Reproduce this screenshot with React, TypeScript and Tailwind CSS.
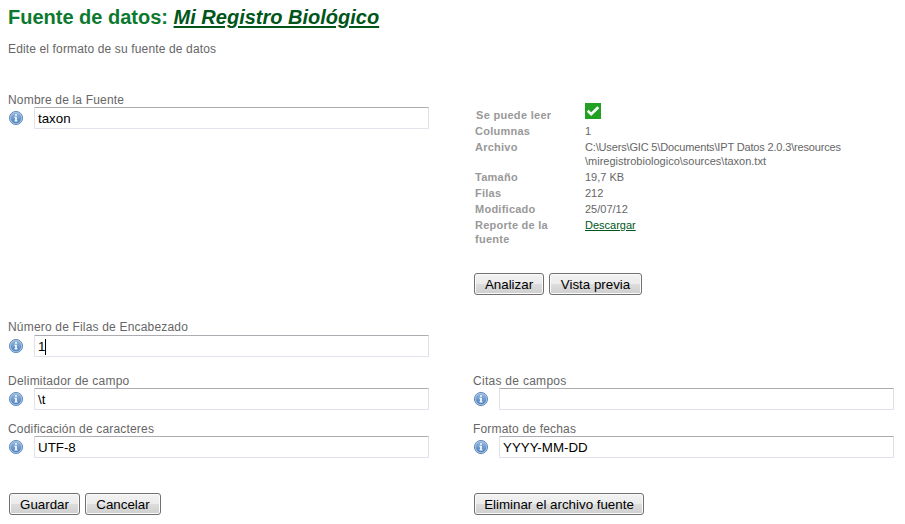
import type { ReactNode } from "react";

function InfoIcon() {
  return (
    <svg className="mt-[3px] mr-[10px] h-4 w-4 shrink-0" viewBox="0 0 16 16">
      <defs>
        <linearGradient id="info" x1="0" y1="0" x2="0" y2="1">
          <stop offset="0" stopColor="#94b8de" />
          <stop offset="1" stopColor="#4d80bd" />
        </linearGradient>
      </defs>
      <circle cx="8" cy="8" r="6.6" fill="#a9c5e4" stroke="#5c87b8" strokeWidth="0.9" />
      <circle cx="8" cy="8" r="5.3" fill="url(#info)" />
      <path d="M7.1 4.2h1.8v1.6H7.1zM6.4 6.8h2.4v3.6h.8v1H6.4v-1h.8V7.8h-.8z" fill="#fff" />
    </svg>
  );
}

type FieldProps = { label: string; value: string; tracking?: string; labelHeight?: string; caret?: boolean };

function Field({ label, value, tracking = "tracking-[0.18px]", labelHeight = "h-[15px]", caret }: FieldProps) {
  return (
    <div className="w-[421px]">
      <div className={`text-[12px] leading-4 whitespace-nowrap text-[#666] ${labelHeight} ${tracking}`}>{label}</div>
      <div className="flex">
        <InfoIcon />
        <div className="flex h-[22px] w-[395px] items-center rounded-[1px] border border-[#e2e3ea] border-t-[#abadb3] border-r-[#dbdfe6] pt-[2px] pl-[3px] text-[13.333px] leading-[16px] text-black">
          <span>{value}</span>
          {caret && <span className="h-[16px] w-px bg-black" />}
        </div>
      </div>
    </div>
  );
}

function Button({ children, width }: { children: ReactNode; width: string }) {
  return (
    <button
      className={`h-[22px] shrink-0 rounded-[3px] border border-[#707070] bg-[linear-gradient(#f2f2f2,#ebebeb_50%,#dddddd_50%,#cfcfcf)] p-0 pt-px text-[13.333px] leading-[20px] whitespace-nowrap text-black shadow-[inset_0_0_0_1px_#fbfbfb] ${width}`}
    >
      {children}
    </button>
  );
}

function Detail({ name, children, height }: { name: string; children: ReactNode; height: string }) {
  return (
    <div className={`flex text-[11px] leading-[14px] ${height}`}>
      <div className="w-[110px] pr-4 font-bold tracking-[0.25px] text-[#999]">{name}</div>
      <div className="whitespace-nowrap text-[#666]">{children}</div>
    </div>
  );
}

export default function App() {
  return (
    <main className="h-[524px] w-[905px] overflow-hidden bg-white pl-2 font-['Liberation_Sans',Arial,sans-serif]">
      <h1 className="h-[41px] pt-[5px] text-[20px] leading-[24px] font-bold whitespace-nowrap text-[#0b7a2f]">
        Fuente de datos: <em className="text-[#00551a] underline decoration-2 underline-offset-2">Mi Registro Biológico</em>
      </h1>
      <p className="h-[51px] text-[12px] leading-4 tracking-[0.14px] text-[#666]">Edite el formato de su fuente de datos</p>
      <div className="flex h-[227px]">
        <div className="w-[465px]">
          <Field label="Nombre de la Fuente" value="taxon" />
        </div>
        <div className="pt-[11px] pl-[2px]">
          <div className="flex h-[21px] text-[11px] leading-[14px]">
            <div className="w-[110px] pt-[5px] pl-px font-bold tracking-[0.3px] text-[#999]">Se puede leer</div>
            <svg className="h-4 w-4" viewBox="0 0 16 16">
              <path d="M0 0h16v16H0z" fill="#22a022" />
              <path d="M2.7 7.8l3.5 3.4L13.3 4.2" fill="none" stroke="#fff" strokeWidth="2.6" />
            </svg>
          </div>
          <Detail name="Columnas" height="h-4">1</Detail>
          <Detail name="Archivo" height="h-[30px]">
            <span className="tracking-[-0.16px]">C:\Users\GIC 5\Documents\IPT Datos 2.0.3\resources</span>
            <br />
            \miregistrobiologico\sources\taxon.txt
          </Detail>
          <Detail name="Tamaño" height="h-4">19,7 KB</Detail>
          <Detail name="Filas" height="h-4">212</Detail>
          <Detail name="Modificado" height="h-4">25/07/12</Detail>
          <Detail name="Reporte de la fuente" height="h-[55px]">
            <a className="text-[#00551a] underline" href="#">Descargar</a>
          </Detail>
          <div className="-ml-px flex gap-[5px]">
            <Button width="w-[70px]">Analizar</Button>
            <Button width="w-[93px]">Vista previa</Button>
          </div>
        </div>
      </div>
      <div className="h-[54px]">
        <Field label="Número de Filas de Encabezado" value="1" labelHeight="h-4" caret />
      </div>
      <div className="flex h-12 gap-[44px]">
        <Field label="Delimitador de campo" value="\t" tracking="tracking-[0.24px]" />
        <Field label="Citas de campos" value="" tracking="tracking-[0.28px]" />
      </div>
      <div className="flex h-[72px] gap-[44px]">
        <Field label="Codificación de caracteres" value="UTF-8" />
        <Field label="Formato de fechas" value="YYYY-MM-DD" />
      </div>
      <div className="flex pl-px">
        <div className="flex w-[465px] gap-[5px]">
          <Button width="w-[71px]">Guardar</Button>
          <Button width="w-[76px]">Cancelar</Button>
        </div>
        <Button width="w-[170px]">Eliminar el archivo fuente</Button>
      </div>
    </main>
  );
}
